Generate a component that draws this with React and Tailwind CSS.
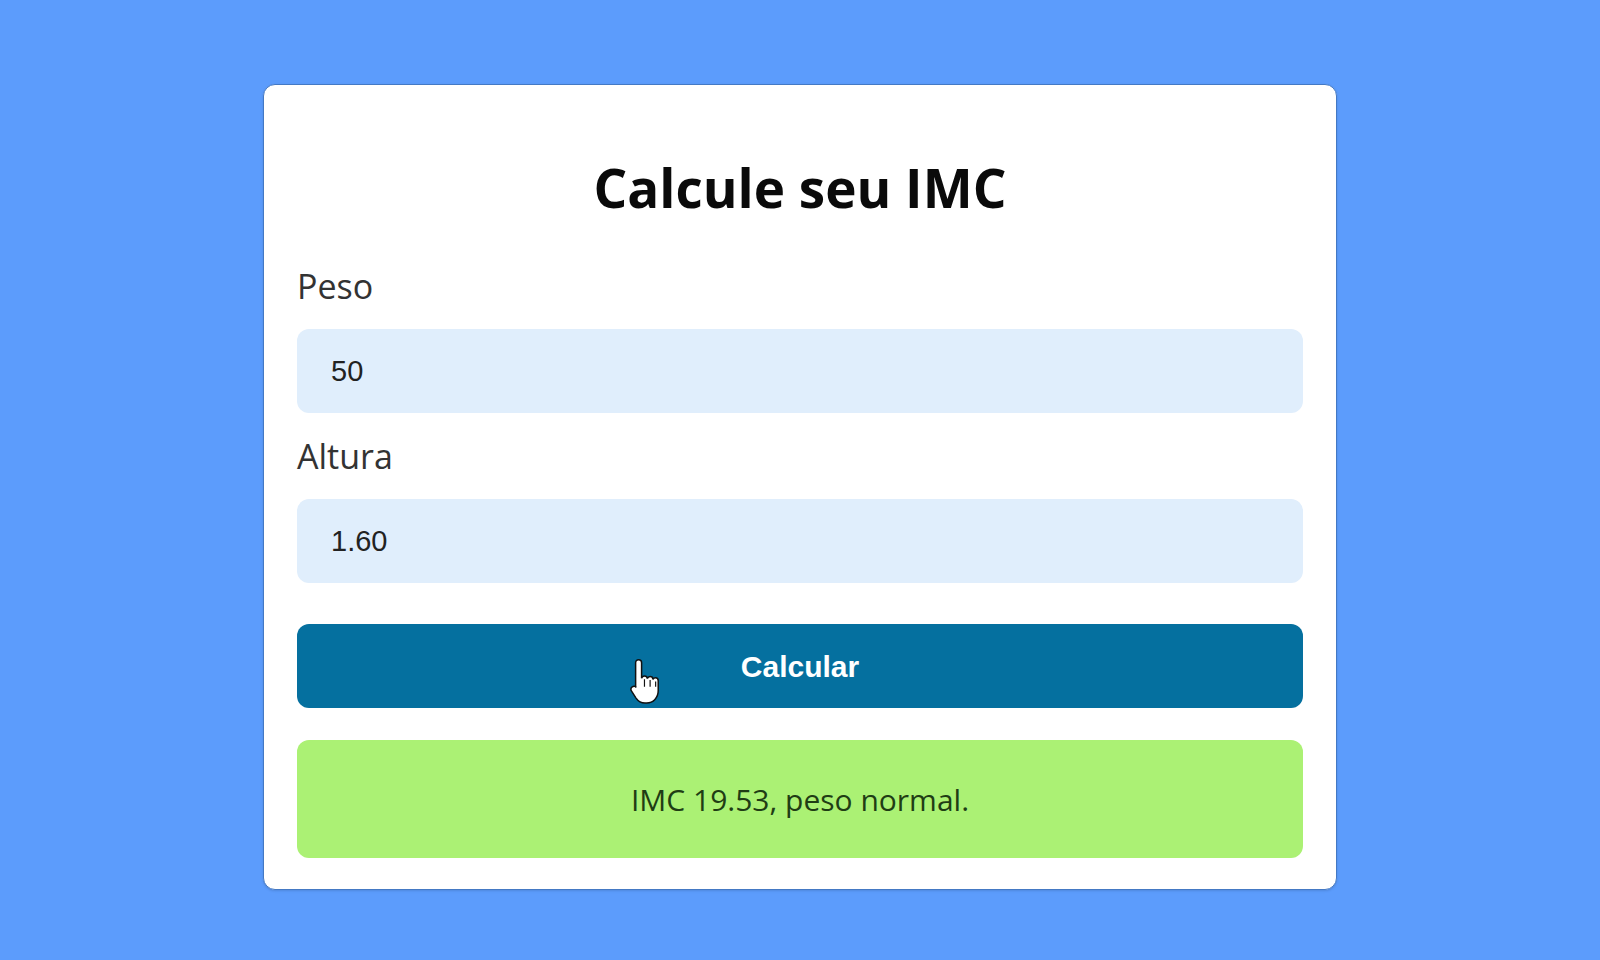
import { useState } from 'react';

const HandCursor = () => (
  <svg
    width="30"
    height="49"
    viewBox="0 0 28 46"
    className="absolute left-[333px] top-[33px]"
  >
    <path
      d="M8 2.5c1.6 0 2.8 1.2 2.8 2.8V20c.4-1.4 1.4-2.2 2.7-2.2 1.5 0 2.6 1 2.7 2.5.4-1.2 1.4-1.9 2.6-1.9 1.5 0 2.6 1.1 2.7 2.6.4-.9 1.3-1.5 2.3-1.5 1.5 0 2.6 1.2 2.6 2.8v9.5c0 6.3-4.6 11.4-10.8 11.4h-1.6c-3.6 0-6.4-1.7-8.4-4.6L1.4 32c-.9-1.3-.6-3 .6-3.9 1.2-.9 2.9-.7 3.8.5l-.6-.8V5.3C5.2 3.7 6.4 2.5 8 2.5z"
      fill="#ffffff"
      stroke="#111111"
      strokeWidth="1.4"
    />
    <path d="M13.5 21v7M18.8 21.5v6.5M24 23v5" stroke="#111111" strokeWidth="1.1" />
  </svg>
);

const Field = ({ label, value, onChange }) => (
  <div className="flex flex-col gap-5">
    <label className="text-[34px] leading-[46px] text-[#333333]">{label}</label>
    <input
      value={value}
      onChange={(e) => onChange(e.target.value)}
      className="h-[84px] w-full rounded-xl bg-[#e0eefc] px-[34px] text-[29px] text-[#222222] outline-none"
      style={{ fontFamily: '"Liberation Sans", Arial, sans-serif' }}
    />
  </div>
);

export default function App() {
  const [peso, setPeso] = useState('50');
  const [altura, setAltura] = useState('1.60');

  return (
    <div
      className="min-h-screen bg-[#5c9cfc] pt-[84px]"
      style={{ fontFamily: '"Open Sans", sans-serif' }}
    >
      <div className="mx-auto flex w-[1074px] flex-col rounded-xl border border-[#4479c4] bg-white px-[33px] pt-[72px] pb-[31px] shadow-sm">
        <h1 className="text-center text-[53px] leading-[62px] font-bold text-[#0a0a0a]">
          Calcule seu IMC
        </h1>

        <div className="mt-[44px] flex flex-col gap-5">
          <Field label="Peso" value={peso} onChange={setPeso} />
          <Field label="Altura" value={altura} onChange={setAltura} />
        </div>

        <button
          className="relative mt-[41px] h-[84px] w-full rounded-xl bg-[#05709f] text-[30px] font-bold text-white"
          style={{ fontFamily: '"Liberation Sans", Arial, sans-serif' }}
        >
          Calcular
          <HandCursor />
        </button>

        <div className="mt-8 flex h-[118px] items-center justify-center rounded-xl bg-[#abf174] text-[30px] text-[#1f3d14]">
          IMC 19.53, peso normal.
        </div>
      </div>
    </div>
  );
}
